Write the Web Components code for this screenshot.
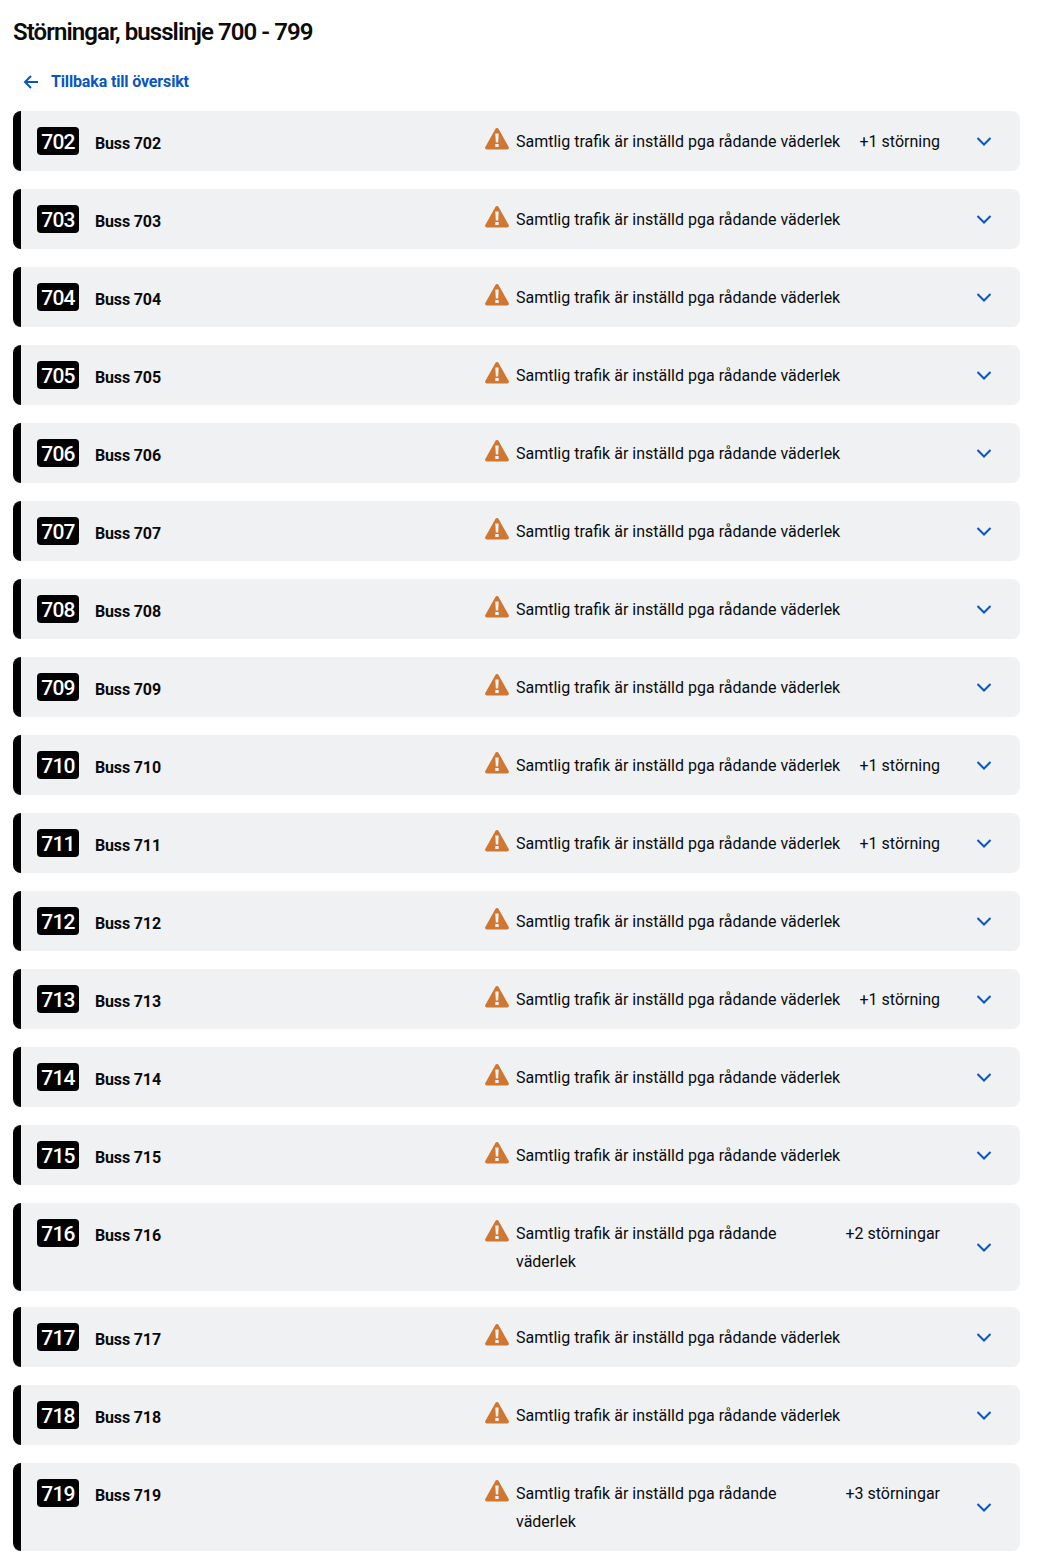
<!doctype html>
<html lang="sv">
<head>
<meta charset="utf-8">
<title>Störningar, busslinje 700 - 799</title>
<style>
	html, body { margin: 0; background: #fff; }
	body { font-family: Roboto, "Liberation Sans", sans-serif; color: #0b0b0b; }
</style>
</head>
<body>
<disruption-page heading="Störningar, busslinje 700 - 799" back="Tillbaka till översikt">
	<disruption-row line="702" extra="+1 störning"></disruption-row>
	<disruption-row line="703"></disruption-row>
	<disruption-row line="704"></disruption-row>
	<disruption-row line="705"></disruption-row>
	<disruption-row line="706"></disruption-row>
	<disruption-row line="707"></disruption-row>
	<disruption-row line="708"></disruption-row>
	<disruption-row line="709"></disruption-row>
	<disruption-row line="710" extra="+1 störning"></disruption-row>
	<disruption-row line="711" extra="+1 störning"></disruption-row>
	<disruption-row line="712"></disruption-row>
	<disruption-row line="713" extra="+1 störning"></disruption-row>
	<disruption-row line="714"></disruption-row>
	<disruption-row line="715"></disruption-row>
	<disruption-row line="716" extra="+2 störningar"></disruption-row>
	<disruption-row line="717"></disruption-row>
	<disruption-row line="718"></disruption-row>
	<disruption-row line="719" extra="+3 störningar"></disruption-row>
</disruption-page>
<script>
;(function(customElements) {
	const message = 'Samtlig trafik är inställd pga rådande väderlek'

	class DisruptionPage extends HTMLElement {
		constructor() {
			super()
			this.attachShadow({ mode: 'open' })
		}

		connectedCallback() {
			this.shadowRoot.innerHTML = `
				<style>
					:host {
						display: block;
						padding: 16px 21px 12px 13px;
					}
					h1 {
						margin: 0;
						font-size: 24px;
						line-height: 32px;
						font-weight: 600;
						letter-spacing: -0.92px;
					}
					a {
						display: flex;
						align-items: center;
						gap: 10px;
						margin: 17px 0 14px 8px;
						height: 32px;
						color: #0a55c4;
						font-size: 16px;
						font-weight: 700;
						letter-spacing: -0.15px;
						text-decoration: none;
					}
					svg {
						display: block;
						margin-top: 1px;
					}
					.rows {
						display: flex;
						flex-direction: column;
						gap: 16px;
					}
				</style>
				<h1>${this.getAttribute('heading')}</h1>
				<a href="#">
					<svg width="20" height="20" viewBox="0 0 20 20" fill="none" stroke="currentColor" stroke-width="2">
						<path d="M17 10H4M10 4l-6 6 6 6"/>
					</svg>
					${this.getAttribute('back')}
				</a>
				<div class="rows"><slot></slot></div>
			`
		}
	}

	class DisruptionRow extends HTMLElement {
		constructor() {
			super()
			this.attachShadow({ mode: 'open' })
		}

		connectedCallback() {
			const line = this.getAttribute('line')
			const extra = this.getAttribute('extra')
			this.shadowRoot.innerHTML = `
				<style>
					:host {
						display: block;
						min-height: 62px;
						font-size: 16px;
						line-height: 28px;
					}
					.card {
						display: flex;
						align-items: center;
						background: #f0f1f3;
						border-left: 8px solid #000;
						border-radius: 8px;
						padding: 16px 24px 16px 16px;
					}
					.main {
						flex: 1;
						min-width: 0;
						display: flex;
						align-items: flex-start;
					}
					.line {
						width: 448px;
						flex: none;
						display: flex;
						align-items: flex-start;
						gap: 16px;
					}
					.name {
						font-weight: 700;
						letter-spacing: -0.15px;
						line-height: 24px;
						padding-top: 5px;
						margin-bottom: -1px;
					}
					.info {
						flex: 1;
						min-width: 0;
						display: flex;
						justify-content: space-between;
						gap: 14px;
					}
					.msg {
						display: flex;
						gap: 7px;
					}
					.msg svg { flex: none; }
					.msg span, .extra {
						padding-top: 1px;
						margin-bottom: -1px;
					}
					.extra { flex: none; }
					.chevron {
						flex: none;
						display: block;
						margin-left: 32px;
						color: #0a55c4;
					}
				</style>
				<div class="card">
					<div class="main">
						<div class="line">
							<line-badge>${line}</line-badge>
							<span class="name">Buss ${line}</span>
						</div>
						<div class="info">
							<div class="msg">
								<svg width="24" height="24" viewBox="0 0 24 24">
									<path fill="#cf7630" d="M12 1c.7 0 1.300.4 1.600 1l10.100 18c.6 1.200-.2 2.500-1.600 2.500H1.900C.5 22.500-.3 21.200.3 20l10.100-18c.3-.6.900-1 1.600-1z"/>
									<path fill="#f0f1f3" d="M10.300 6.500h3.400l-.5 9h-2.400zM10.300 17h3.400v3h-3.400z"/>
								</svg>
								<span>${message}</span>
							</div>
							${extra ? `<span class="extra">${extra}</span>` : ''}
						</div>
					</div>
					<svg class="chevron" width="24" height="24" viewBox="0 0 24 24" fill="none" stroke="currentColor" stroke-width="2">
						<path d="M5.500 9l6.500 6.500L18.500 9"/>
					</svg>
				</div>
			`
		}
	}

	class LineBadge extends HTMLElement {
		constructor() {
			super()
			this.attachShadow({ mode: 'open' })
		}

		connectedCallback() {
			this.shadowRoot.innerHTML = `
				<style>
					:host {
						display: block;
						flex: none;
						width: 42px;
						height: 28px;
						background: #000;
						border-radius: 4px;
						color: #fff;
						font-size: 21px;
						font-weight: 500;
						line-height: 30px;
						letter-spacing: -0.8px;
						text-align: center;
					}
				</style>
				<slot></slot>
			`
		}
	}

	customElements.define('line-badge', LineBadge)
	customElements.define('disruption-row', DisruptionRow)
	customElements.define('disruption-page', DisruptionPage)
})(customElements)
</script>
</body>
</html>
